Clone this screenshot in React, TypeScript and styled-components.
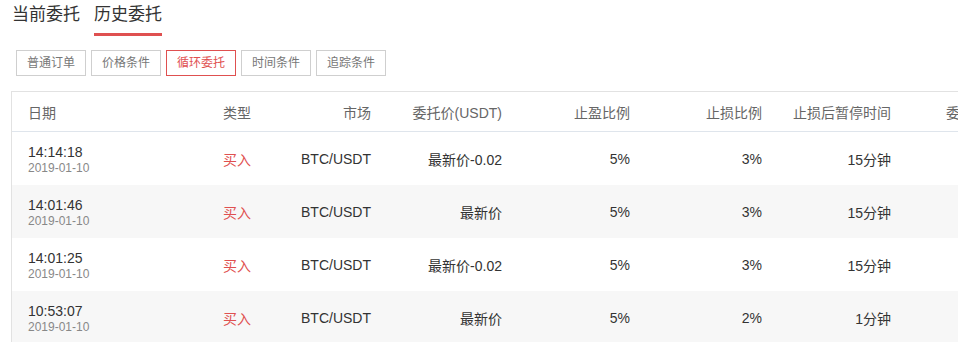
import styled, { createGlobalStyle } from "styled-components";

const GlobalStyle = createGlobalStyle`
  html, body {
    margin: 0;
    padding: 0;
    overflow: hidden;
    background: #fff;
  }
  body {
    font-family: "Liberation Sans", "Noto Sans CJK SC", sans-serif;
    color: #333;
  }
`;

const Page = styled.div`
  padding-top: 4px;
`;

const Tabs = styled.div`
  display: flex;
  gap: 14px;
  padding-left: 12px;
`;

const Tab = styled.div<{ $active?: boolean }>`
  font-size: 17px;
  line-height: 22px;
  color: #333;
  padding-bottom: 7px;
  border-bottom: 3px solid ${(p) => (p.$active ? "#df5050" : "transparent")};
`;

const Filters = styled.div`
  display: flex;
  gap: 5px;
  padding-left: 16px;
  margin-top: 14px;
`;

const FilterButton = styled.button<{ $active?: boolean }>`
  font-family: inherit;
  font-size: 12px;
  line-height: 24px;
  height: 26px;
  width: 70px;
  padding: 0;
  background: #fff;
  color: ${(p) => (p.$active ? "#df5050" : "#777")};
  border: 1px solid ${(p) => (p.$active ? "#df5050" : "#cfcfcf")};
  outline: none;
`;

const Table = styled.div`
  margin: 15px 0 0 11px;
  width: 1100px;
  border-top: 1px solid #e2e2e2;
  border-left: 1px solid #e2e2e2;
`;

const cols = "119px 120px 120px 131px 128px 132px 129px 111px";

const HeadRow = styled.div`
  display: grid;
  grid-template-columns: ${cols};
  height: 39px;
  align-items: center;
  border-bottom: 1px solid #dfe5ec;
  font-size: 14px;
  color: #666;
`;

const Row = styled.div<{ $striped?: boolean }>`
  display: grid;
  grid-template-columns: ${cols};
  height: 53px;
  align-items: center;
  font-size: 14px;
  color: #333;
  background: ${(p) => (p.$striped ? "#f7f7f7" : "#fff")};
`;

const Cell = styled.div<{ $left?: boolean; $red?: boolean }>`
  text-align: ${(p) => (p.$left ? "left" : "right")};
  padding-left: ${(p) => (p.$left ? "16px" : "0")};
  color: ${(p) => (p.$red ? "#df5050" : "inherit")};
  white-space: nowrap;
`;

const DateCell = styled.div`
  padding: 3px 0 0 16px;
  display: flex;
  flex-direction: column;
`;

const Time = styled.span`
  font-size: 14px;
  line-height: 16px;
  color: #333;
`;

const Day = styled.span`
  font-size: 12px;
  line-height: 16px;
  color: #888;
`;

const headers = ["类型", "市场", "委托价(USDT)", "止盈比例", "止损比例", "止损后暂停时间", "委托总量"];

const rows = [
  { time: "14:14:18", price: "最新价-0.02", win: "5%", loss: "3%", pause: "15分钟" },
  { time: "14:01:46", price: "最新价", win: "5%", loss: "3%", pause: "15分钟" },
  { time: "14:01:25", price: "最新价-0.02", win: "5%", loss: "3%", pause: "15分钟" },
  { time: "10:53:07", price: "最新价", win: "5%", loss: "2%", pause: "1分钟" },
];

export default function App() {
  return (
    <Page>
      <GlobalStyle />
      <Tabs>
        <Tab>当前委托</Tab>
        <Tab $active>历史委托</Tab>
      </Tabs>

      <Filters>
        <FilterButton>普通订单</FilterButton>
        <FilterButton>价格条件</FilterButton>
        <FilterButton $active>循环委托</FilterButton>
        <FilterButton>时间条件</FilterButton>
        <FilterButton>追踪条件</FilterButton>
      </Filters>

      <Table>
        <HeadRow>
          <Cell $left>日期</Cell>
          {headers.map((h) => (
            <Cell key={h}>{h}</Cell>
          ))}
        </HeadRow>
        {rows.map((r, i) => (
          <Row key={r.time} $striped={i % 2 === 1}>
            <DateCell>
              <Time>{r.time}</Time>
              <Day>2019-01-10</Day>
            </DateCell>
            <Cell $red>买入</Cell>
            <Cell>BTC/USDT</Cell>
            <Cell>{r.price}</Cell>
            <Cell>{r.win}</Cell>
            <Cell>{r.loss}</Cell>
            <Cell>{r.pause}</Cell>
            <Cell></Cell>
          </Row>
        ))}
      </Table>
    </Page>
  );
}
